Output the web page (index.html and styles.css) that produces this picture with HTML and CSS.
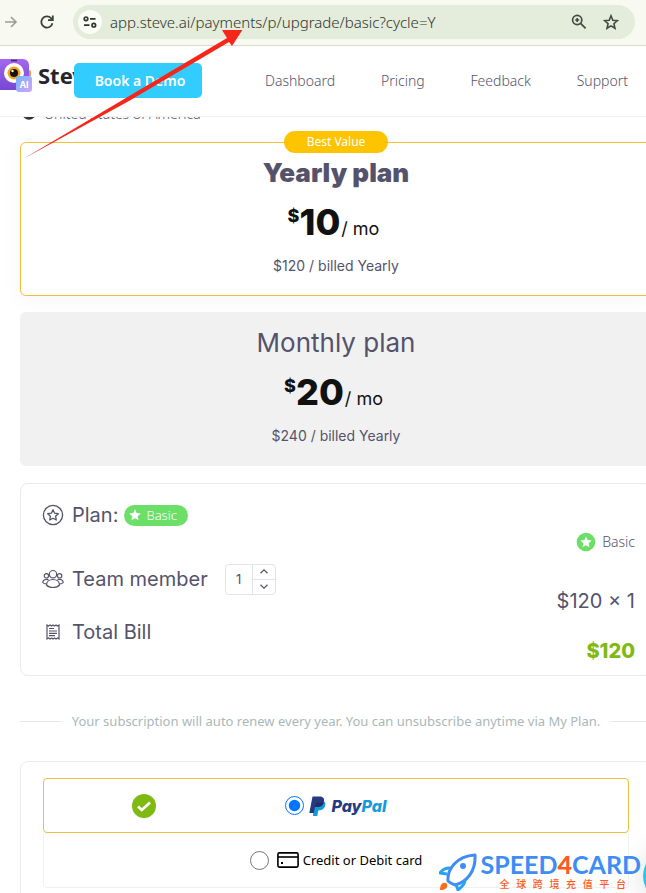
FILE: index.html
```html
<!DOCTYPE html>
<html lang="en">
<head>
    <meta charset="UTF-8">
    <meta name="viewport" content="width=device-width, initial-scale=1.0">
    <title>Upgrade - Steve AI</title>
    <link rel="stylesheet" href="styles.css">
</head>
<body>
    <div class="toolbar">
        <button class="tool" aria-label="Forward">
            <svg width="16" height="16" viewBox="0 0 16 16" fill="none" stroke="#9a9f96" stroke-width="1.6"><path d="M0 8h11M6 3l5 5-5 5"/></svg>
        </button>
        <button class="tool reload" aria-label="Reload">
            <svg width="16" height="16" viewBox="0 0 16 16" fill="none" stroke="#3b4038" stroke-width="1.8"><path d="M13.4 9.2A5.6 5.6 0 1 1 12 4.2l1.6 1.6"/><path d="M13.8 1.5v4.7H9"/></svg>
        </button>
        <div class="address">
            <button class="site-info" aria-label="Site information">
                <svg width="14" height="12" viewBox="0 0 14 12" fill="none" stroke="#30342e" stroke-width="1.7"><circle cx="3" cy="2.8" r="1.8"/><path d="M7 2.8h5.5M1 9.2h5.5"/><circle cx="10.8" cy="9.2" r="1.8"/></svg>
            </button>
            <input class="url" type="text" aria-label="Address" value="app.steve.ai/payments/p/upgrade/basic?cycle=Y">
            <button class="tool" aria-label="Zoom">
                <svg width="16" height="16" viewBox="0 0 16 16" fill="none" stroke="#454a42" stroke-width="1.7"><circle cx="6.2" cy="6" r="4.6"/><path d="M9.6 9.4l5 5M6.2 4v4M4.2 6h4"/></svg>
            </button>
            <button class="tool star" aria-label="Bookmark">
                <svg width="16" height="16" viewBox="0 0 16 16" fill="none" stroke="#454a42" stroke-width="1.6"><path d="M8 1.8l1.8 4.4 4.7.4-3.6 3.1 1.1 4.6L8 11.9l-4 2.4 1.1-4.6-3.6-3.1 4.7-.4z"/></svg>
            </button>
        </div>
    </div>

    <header class="header">
        <a class="logo" href="#">
            <svg width="33" height="35" viewBox="0 0 33 35">
                <defs>
                    <linearGradient id="body" x1="0" y1="0" x2="0" y2="1"><stop offset="0" stop-color="#a368ee"/><stop offset="1" stop-color="#7746d4"/></linearGradient>
                    <linearGradient id="chip" x1="0" y1="0" x2="1" y2="1"><stop offset="0" stop-color="#6fb7ff"/><stop offset="1" stop-color="#d6a0f7"/></linearGradient>
                </defs>
                <rect x="25" y="12" width="6" height="7" rx="2" fill="#e9974c"/>
                <rect x="-5" y="1" width="34" height="31" rx="6" fill="url(#body)"/>
                <path d="M11 2.5h6" stroke="#3e2575" stroke-width="1.5"/>
                <circle cx="14" cy="15" r="10" fill="#fff"/>
                <circle cx="14" cy="15" r="6.5" fill="#f2a51d"/>
                <circle cx="14" cy="15" r="4" fill="#16120e"/>
                <circle cx="12.5" cy="13" r="1.2" fill="#fff"/>
                <rect x="16" y="18" width="16" height="16" rx="3" fill="url(#chip)"/>
                <text x="24" y="29.5" text-anchor="middle" class="chip-text">AI</text>
            </svg>
            <span>Steve</span>
        </a>
        <button class="demo">Book a Demo</button>
        <nav class="nav">
            <a href="#">Dashboard</a>
            <a href="#">Pricing</a>
            <a href="#">Feedback</a>
            <a href="#">Support</a>
        </nav>
    </header>

    <main class="content">
        <div class="country">
            <svg width="14" height="14" viewBox="0 0 14 14"><circle cx="7" cy="7" r="6" fill="#fff" stroke="#333" stroke-width="1.5"/><path d="M3 9h7l2 1-3 3H5z" fill="#333"/></svg>
            United States of America
        </div>

        <section class="plan yearly">
            <span class="best">Best Value</span>
            <h2>Yearly plan</h2>
            <p class="price"><sup>$</sup><b>10</b><span>/ mo</span></p>
            <p class="billed">$120 / billed Yearly</p>
        </section>

        <section class="plan monthly">
            <h2>Monthly plan</h2>
            <p class="price"><sup>$</sup><b>20</b><span>/ mo</span></p>
            <p class="billed">$240 / billed Yearly</p>
        </section>

        <section class="summary">
            <div class="items">
                <div class="item">
                    <svg class="icon" width="22" height="22" viewBox="0 0 22 22" fill="none" stroke="#55536c" stroke-width="1.3"><circle cx="11" cy="11" r="9.6"/><path d="M11 5.8l1.6 3.4 3.7.5-2.7 2.6.7 3.7-3.3-1.8L7.7 16l.7-3.7-2.7-2.6 3.7-.5z" stroke-linejoin="round"/></svg>
                    <span>Plan:</span>
                    <span class="tag">
                        <svg width="12" height="12" viewBox="0 0 12 12" fill="#fff"><path d="M6 .3l1.7 3.8 4.1.4-3.1 2.7.9 4.1L6 9.2l-3.6 2.1.9-4.1L.2 4.5l4.1-.4z"/></svg>
                        Basic
                    </span>
                </div>
                <div class="item">
                    <svg class="icon" width="22" height="20" viewBox="0 0 22 20" fill="none" stroke="#55536c" stroke-width="1.2"><circle cx="11" cy="5.2" r="3.7"/><path d="M4.5 16c0-3.5 2.9-5.5 6.5-5.5s6.5 2 6.5 5.5c-1.5 1.8-3.8 2.5-6.5 2.5s-5-.7-6.5-2.5z"/><circle cx="4.4" cy="6.8" r="2.2"/><circle cx="17.6" cy="6.8" r="2.2"/><path d="M6.5 10.6C3.5 9.8 1 11 .7 13.5c.8 1 2 1.4 3.7 1.4M15.5 10.6c3-.8 5.5.4 5.8 2.9-.8 1-2 1.4-3.7 1.4"/></svg>
                    <label for="members">Team member</label>
                    <span class="stepper">
                        <input id="members" type="text" value="1">
                        <span class="steps">
                            <button aria-label="More"><svg width="8" height="5" viewBox="0 0 8 5" fill="none" stroke="#55536c" stroke-width="1.2"><path d="M.5 4.3L4 .9l3.5 3.4"/></svg></button>
                            <button aria-label="Less"><svg width="8" height="5" viewBox="0 0 8 5" fill="none" stroke="#55536c" stroke-width="1.2"><path d="M.5.7L4 4.1 7.5.7"/></svg></button>
                        </span>
                    </span>
                </div>
                <div class="item">
                    <svg class="icon" width="22" height="18" viewBox="0 0 22 18" fill="none" stroke="#55536c" stroke-width="1.2"><path d="M5 2l1.5 1L8 2l1.5 1L11 2l1.5 1L14 2l1.5 1L17 2v14l-1.5-1-1.5 1-1.5-1-1.5 1-1.5-1L8 16l-1.5-1L5 16z"/><path d="M7 5.5h5M7 8h8M7 10.3h8M7 12.6h6"/></svg>
                    <span>Total Bill</span>
                </div>
            </div>
            <div class="amounts">
                <p class="basic">
                    <svg width="20" height="20" viewBox="0 0 20 20"><circle cx="10" cy="10" r="9.3" fill="#6bdf68"/><path d="M10 4.5l1.7 3.6 3.9.5-2.9 2.7.8 3.9-3.5-1.9-3.5 1.9.8-3.9-2.9-2.7 3.9-.5z" fill="#fff"/></svg>
                    Basic
                </p>
                <p class="calc">$120 × 1</p>
                <p class="total">$120</p>
            </div>
        </section>

        <p class="renew">Your subscription will auto renew every year. You can unsubscribe anytime via My Plan.</p>

        <form class="payment">
            <label class="method selected">
                <svg class="check" width="24" height="24" viewBox="0 0 24 24"><circle cx="12" cy="12" r="12" fill="#7fba13"/><path d="M6 12.5l3.8 3.5L18 8.5" fill="none" stroke="#fff" stroke-width="2.7"/></svg>
                <input type="radio" name="method" checked>
                <svg width="17" height="20" viewBox="0 0 17 20"><path d="M5 4.5h8.5c3 .8 3.4 3.5 2.4 6-1 2.8-3.3 3.9-6.6 3.9L8.3 20H4z" fill="#179bd7"/><path d="M3.5.5h7.2c3.7 0 5.1 2.3 4.1 5.5-1 3.800-3.600 5-7.300 5H6L4.800 17H.3z" fill="#253b80"/><path d="M7 6.5h7.7c-.8 3-3.200 4.500-7.200 4.500H6.100z" fill="#222d65"/></svg>
                <span class="paypal">Pay<i>Pal</i></span>
            </label>
            <label class="method card">
                <input type="radio" name="method">
                <svg width="22" height="16" viewBox="0 0 22 16" fill="none" stroke="#000"><rect x=".9" y=".9" width="20.2" height="14.2" rx="1.5" stroke-width="1.6"/><path d="M1 5h20" stroke-width="1.6"/><path d="M4 11h2" stroke-width="2"/></svg>
                <span>Credit or Debit card</span>
            </label>
        </form>
    </main>

    <button class="chat" aria-label="Open chat"></button>

    <div class="watermark">
        <svg width="38" height="38" viewBox="0 0 38 38" fill="none" stroke-linejoin="round">
            <path d="M9 28C8 17 17 3 36 2c1 16-8 27-20 30-3-1-5-2-7-4z" fill="#fff" stroke="#3d8df5" stroke-width="3"/>
            <path d="M11 15c-5 0-8 2-10 5l7 1M26 27c0 4-3 7-7 10l-2-6" stroke="#2aa2ee" stroke-width="3"/>
            <circle cx="24" cy="13" r="3" fill="#3d8df5"/>
            <path d="M7 30c-4-1-6 2-6 7 5 0 8-2 7-6z" fill="#ff6b1a"/>
        </svg>
        <div>
            <div class="brand">SPEED<b>4</b>CARD</div>
            <div class="slogan" lang="zh-CN">全球跨境充值平台</div>
        </div>
    </div>

    <svg class="arrow" width="220" height="130" viewBox="0 0 220 130">
        <path d="M0 129L204 8l-5-8 21-1-11 17-3-4L106 71z" fill="#f7261b"/>
    </svg>
</body>
</html>
```
FILE: styles.css
```css
* {
    box-sizing: border-box;
}

body {
    margin: 0;
    height: 100vh;
    display: flex;
    flex-direction: column;
    position: relative;
    overflow: hidden;
    background-color: #fff;
    color: #55536c;
    font-family: "Noto Sans", sans-serif;
    font-size: 14px;
}

h2, p {
    margin: 0;
    font-weight: normal;
}

button {
    border: none;
    background: none;
    padding: 0;
    cursor: pointer;
}

svg {
    display: block;
    flex-shrink: 0;
}

a {
    color: inherit;
    text-decoration: none;
}

/* browser bar */
.toolbar {
    display: flex;
    align-items: center;
    padding: 5px 11px 6px 5px;
    background-color: #f8faf1;
    border-bottom: 1px solid #d9dccd;
}

.reload {
    margin: 0 18px;
}

.address {
    flex: 1;
    display: flex;
    align-items: center;
    height: 34px;
    padding: 0 16px 0 5px;
    background-color: #e4ecdb;
    border-radius: 17px;
}

.site-info {
    display: flex;
    align-items: center;
    justify-content: center;
    width: 24px;
    height: 24px;
    border-radius: 50%;
    background-color: #fafcf5;
}

.url {
    flex: 1;
    min-width: 0;
    margin-left: 8px;
    padding: 0;
    border: none;
    background: none;
    color: #30352e;
    font-family: "Noto Sans", sans-serif;
    font-size: 15px;
    font-weight: 300;
}

.star {
    margin-left: 16px;
}

/* site header */
.header {
    display: flex;
    align-items: center;
    height: 71px;
    padding: 0 18px 2px 0;
    border-bottom: 1px solid #f1f1f1;
}

.logo {
    align-self: flex-start;
    display: flex;
    align-items: flex-start;
    gap: 5px;
    width: 74px;
    margin-top: 12px;
    overflow: hidden;
    color: #25252b;
    font-family: "Noto Sans", sans-serif;
    font-size: 22px;
    font-weight: bold;
    line-height: 34px;
}

.chip-text {
    fill: #fff;
    font-family: Inter, sans-serif;
    font-size: 9px;
    font-weight: bold;
}

.demo {
    width: 128px;
    height: 35px;
    padding-left: 4px;
    border-radius: 5px;
    background-color: #33ccff;
    color: #fff;
    font-family: "Noto Sans", sans-serif;
    font-size: 14px;
    font-weight: 600;
}

.nav {
    flex: 1;
    display: flex;
    justify-content: space-between;
    margin-left: 63px;
    font-weight: 300;
}

/* the column runs a little past the right edge of the window */
.content {
    flex: 1;
    min-height: 0;
    overflow: hidden;
    margin-right: -6px;
    padding: 0 0 0 20px;
}

.country {
    display: flex;
    align-items: center;
    gap: 8px;
    height: 20px;
    margin: -14px 0 19px 2px;
    font-weight: 300;
}

.plan {
    position: relative;
    height: 154px;
    padding-top: 14px;
    border-radius: 6px;
    text-align: center;
    font-family: Inter, sans-serif;
    margin-bottom: 16px;
}

.yearly {
    padding-top: 13px;
    border: 1px solid #f0bf3c;
    background-color: #fff;
    box-shadow: 0 4px 24px rgba(0, 0, 0, 0.04);
}

.monthly {
    background-color: #f1f1f1;
    margin-bottom: 17px;
}

.best {
    position: absolute;
    top: -12px;
    left: 50%;
    transform: translateX(-50%);
    width: 104px;
    border-radius: 11px;
    background-color: #ffc400;
    color: #fff;
    font-family: "Noto Sans", sans-serif;
    font-size: 12px;
    line-height: 22px;
}

.plan h2 {
    font-size: 26px;
    line-height: 34px;
}

.yearly h2 {
    font-weight: 900;
}

.price {
    display: flex;
    justify-content: center;
    align-items: baseline;
    margin-top: 10px;
    padding-right: 5px;
    color: #111;
    line-height: 44px;
}

.price sup {
    align-self: flex-start;
    font-size: 18px;
    font-weight: 800;
    line-height: 32px;
}

.price b {
    font-size: 36px;
    font-weight: 800;
}

.price span {
    margin-left: 1px;
    font-size: 18px;
}

.billed {
    margin-top: 4px;
    font-size: 14px;
    line-height: 22px;
}

.summary,
.payment {
    border: 1px solid #eaeaec;
    border-radius: 8px;
}

.summary {
    display: flex;
    justify-content: space-between;
    height: 193px;
    padding: 16px 16px 0 21px;
    font-family: Inter, sans-serif;
    font-size: 20px;
}

.item {
    display: flex;
    align-items: center;
    gap: 8px;
    height: 30px;
}

.item + .item {
    margin-top: 34px;
}

.item + .item + .item {
    margin-top: 23px;
}

.tag {
    display: flex;
    align-items: center;
    gap: 5px;
    height: 21px;
    margin-left: -2px;
    padding: 0 11px 0 5px;
    border-radius: 11px;
    background-color: #6bdf68;
    color: #fff;
    font-family: "Noto Sans", sans-serif;
    font-size: 13px;
    font-weight: 300;
}

.stepper {
    display: flex;
    width: 51px;
    height: 31px;
    margin-left: 9px;
    border: 1px solid #e4e4e8;
    border-radius: 4px;
}

.stepper input {
    flex: 1;
    min-width: 0;
    padding: 0;
    border: none;
    background: none;
    color: #55536c;
    font-family: Inter, sans-serif;
    font-size: 13px;
    text-align: center;
}

.steps {
    display: flex;
    flex-direction: column;
    width: 23px;
    border-left: 1px solid #e4e4e8;
}

.steps button {
    flex: 1;
    display: flex;
    align-items: center;
    justify-content: center;
}

.steps button + button {
    border-top: 1px solid #e4e4e8;
}

.amounts {
    padding-top: 30px;
    text-align: right;
}

.basic {
    display: flex;
    justify-content: flex-end;
    align-items: center;
    gap: 6px;
    font-family: "Noto Sans", sans-serif;
    font-size: 14px;
    font-weight: 300;
    line-height: 24px;
}

.calc {
    margin-top: 34px;
    line-height: 26px;
}

.total {
    margin-top: 24px;
    color: #7fb917;
    font-weight: 800;
    line-height: 26px;
}

.renew {
    display: flex;
    align-items: center;
    gap: 10px;
    margin: 35px 0 30px;
    color: #a9b8ba;
    font-size: 13px;
    line-height: 20px;
    white-space: nowrap;
}

.renew::before,
.renew::after {
    content: "";
    flex: 1;
    border-top: 1px solid #e6e8e9;
}

.payment {
    height: 200px;
    padding: 16px 22px;
}

.method {
    display: flex;
    align-items: center;
    justify-content: center;
    gap: 5px;
    position: relative;
    height: 55px;
    border: 1px solid #f0f0f0;
    border-radius: 4px;
}

.selected {
    border-color: #efbf42;
}

.card {
    gap: 8px;
    border-top: none;
    color: #000;
    font-size: 13px;
}

.card span {
    margin-left: -4px;
}

.check {
    position: absolute;
    left: 88px;
}

.method input {
    width: 19px;
    height: 19px;
    margin: 0;
    accent-color: #0075ff;
}

.paypal {
    color: #253b80;
    font-family: Inter, sans-serif;
    font-size: 16px;
    font-style: italic;
    font-weight: 800;
}

.paypal i {
    color: #179bd7;
}

.chat {
    position: absolute;
    right: -47px;
    bottom: -8px;
    width: 50px;
    height: 50px;
    border-radius: 50%;
    background-color: #2cc4e8;
    box-shadow: 0 0 30px rgba(0, 0, 0, 0.15);
}

.watermark {
    position: absolute;
    right: 5px;
    bottom: 2px;
    display: flex;
    align-items: flex-end;
    gap: 4px;
}

.brand {
    color: #3d8df5;
    font-family: Lato, sans-serif;
    font-size: 25px;
    font-weight: bold;
    line-height: 24px;
}

.brand b,
.slogan {
    color: #ff5a1f;
}

.slogan {
    margin: 0 15px 0 19px;
    font-family: "Noto Sans CJK SC", sans-serif;
    font-size: 10px;
    font-weight: 500;
    line-height: 15px;
    text-align-last: justify;
}

.arrow {
    position: absolute;
    top: 30px;
    left: 23px;
    pointer-events: none;
}
```
